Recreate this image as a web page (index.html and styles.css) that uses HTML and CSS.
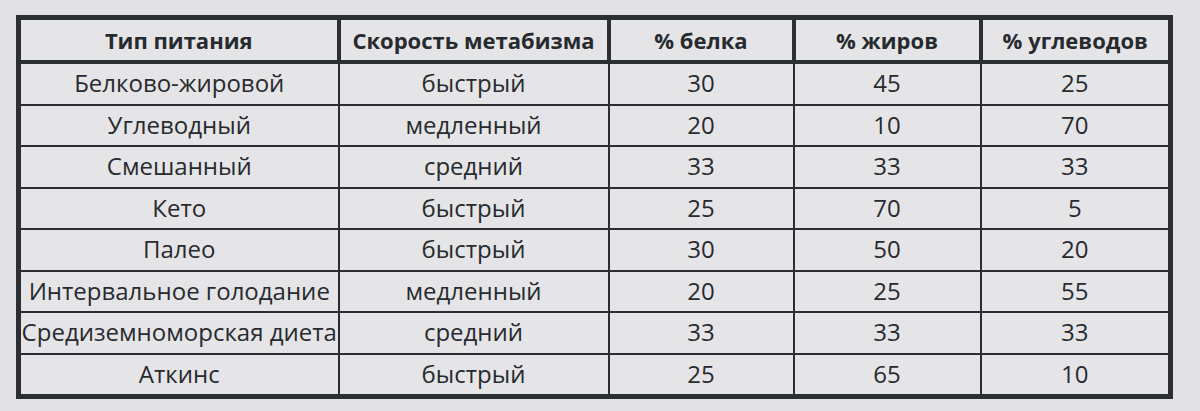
FILE: index.html
```html
<!DOCTYPE html>
<html lang="ru">
<head>
<meta charset="utf-8">
<link rel="stylesheet" href="styles.css">
</head>
<body>
<table class="diet">
  <colgroup>
    <col class="c1"><col class="c2"><col class="c3"><col class="c4"><col class="c5">
  </colgroup>
  <thead>
    <tr><th>Тип питания</th><th>Скорость метабизма</th><th>% белка</th><th>% жиров</th><th>% углеводов</th></tr>
  </thead>
  <tbody>
    <tr><td>Белково-жировой</td><td>быстрый</td><td>30</td><td>45</td><td>25</td></tr>
    <tr><td>Углеводный</td><td>медленный</td><td>20</td><td>10</td><td>70</td></tr>
    <tr><td>Смешанный</td><td>средний</td><td>33</td><td>33</td><td>33</td></tr>
    <tr><td>Кето</td><td>быстрый</td><td>25</td><td>70</td><td>5</td></tr>
    <tr><td>Палео</td><td>быстрый</td><td>30</td><td>50</td><td>20</td></tr>
    <tr><td>Интервальное голодание</td><td>медленный</td><td>20</td><td>25</td><td>55</td></tr>
    <tr><td>Средиземноморская диета</td><td>средний</td><td>33</td><td>33</td><td>33</td></tr>
    <tr><td>Аткинс</td><td>быстрый</td><td>25</td><td>65</td><td>10</td></tr>
  </tbody>
</table>
</body>
</html>
```
FILE: styles.css
```css
html, body {
  margin: 0;
  padding: 0;
}
body {
  width: 1200px;
  height: 411px;
  overflow: hidden;
  background: #e2e2e4;
  font-family: "Open Sans", Roboto, "Liberation Sans", sans-serif;
  color: #272a2e;
}
.diet {
  margin: 15px 0 0 16px;
  width: 1152px;
  border-collapse: collapse;
  table-layout: fixed;
  border: 5px solid #2b2f33;
  background: #e5e5e7;
}
.c1 { width: 320px; }
.c2 { width: 270px; }
.c3 { width: 185px; }
.c4 { width: 187px; }
.c5 { width: 190px; }
th, td {
  padding: 0;
  text-align: center;
  white-space: nowrap;
  overflow: hidden;
  line-height: 1.2;
}
th {
  height: 40px;
  border: 4px solid #2b2f33;
  font-weight: 700;
  font-size: 22px;
}
td {
  height: 39.5px;
  border: 2px solid #2b2f33;
  font-size: 24px;
  font-weight: 400;
}
```
